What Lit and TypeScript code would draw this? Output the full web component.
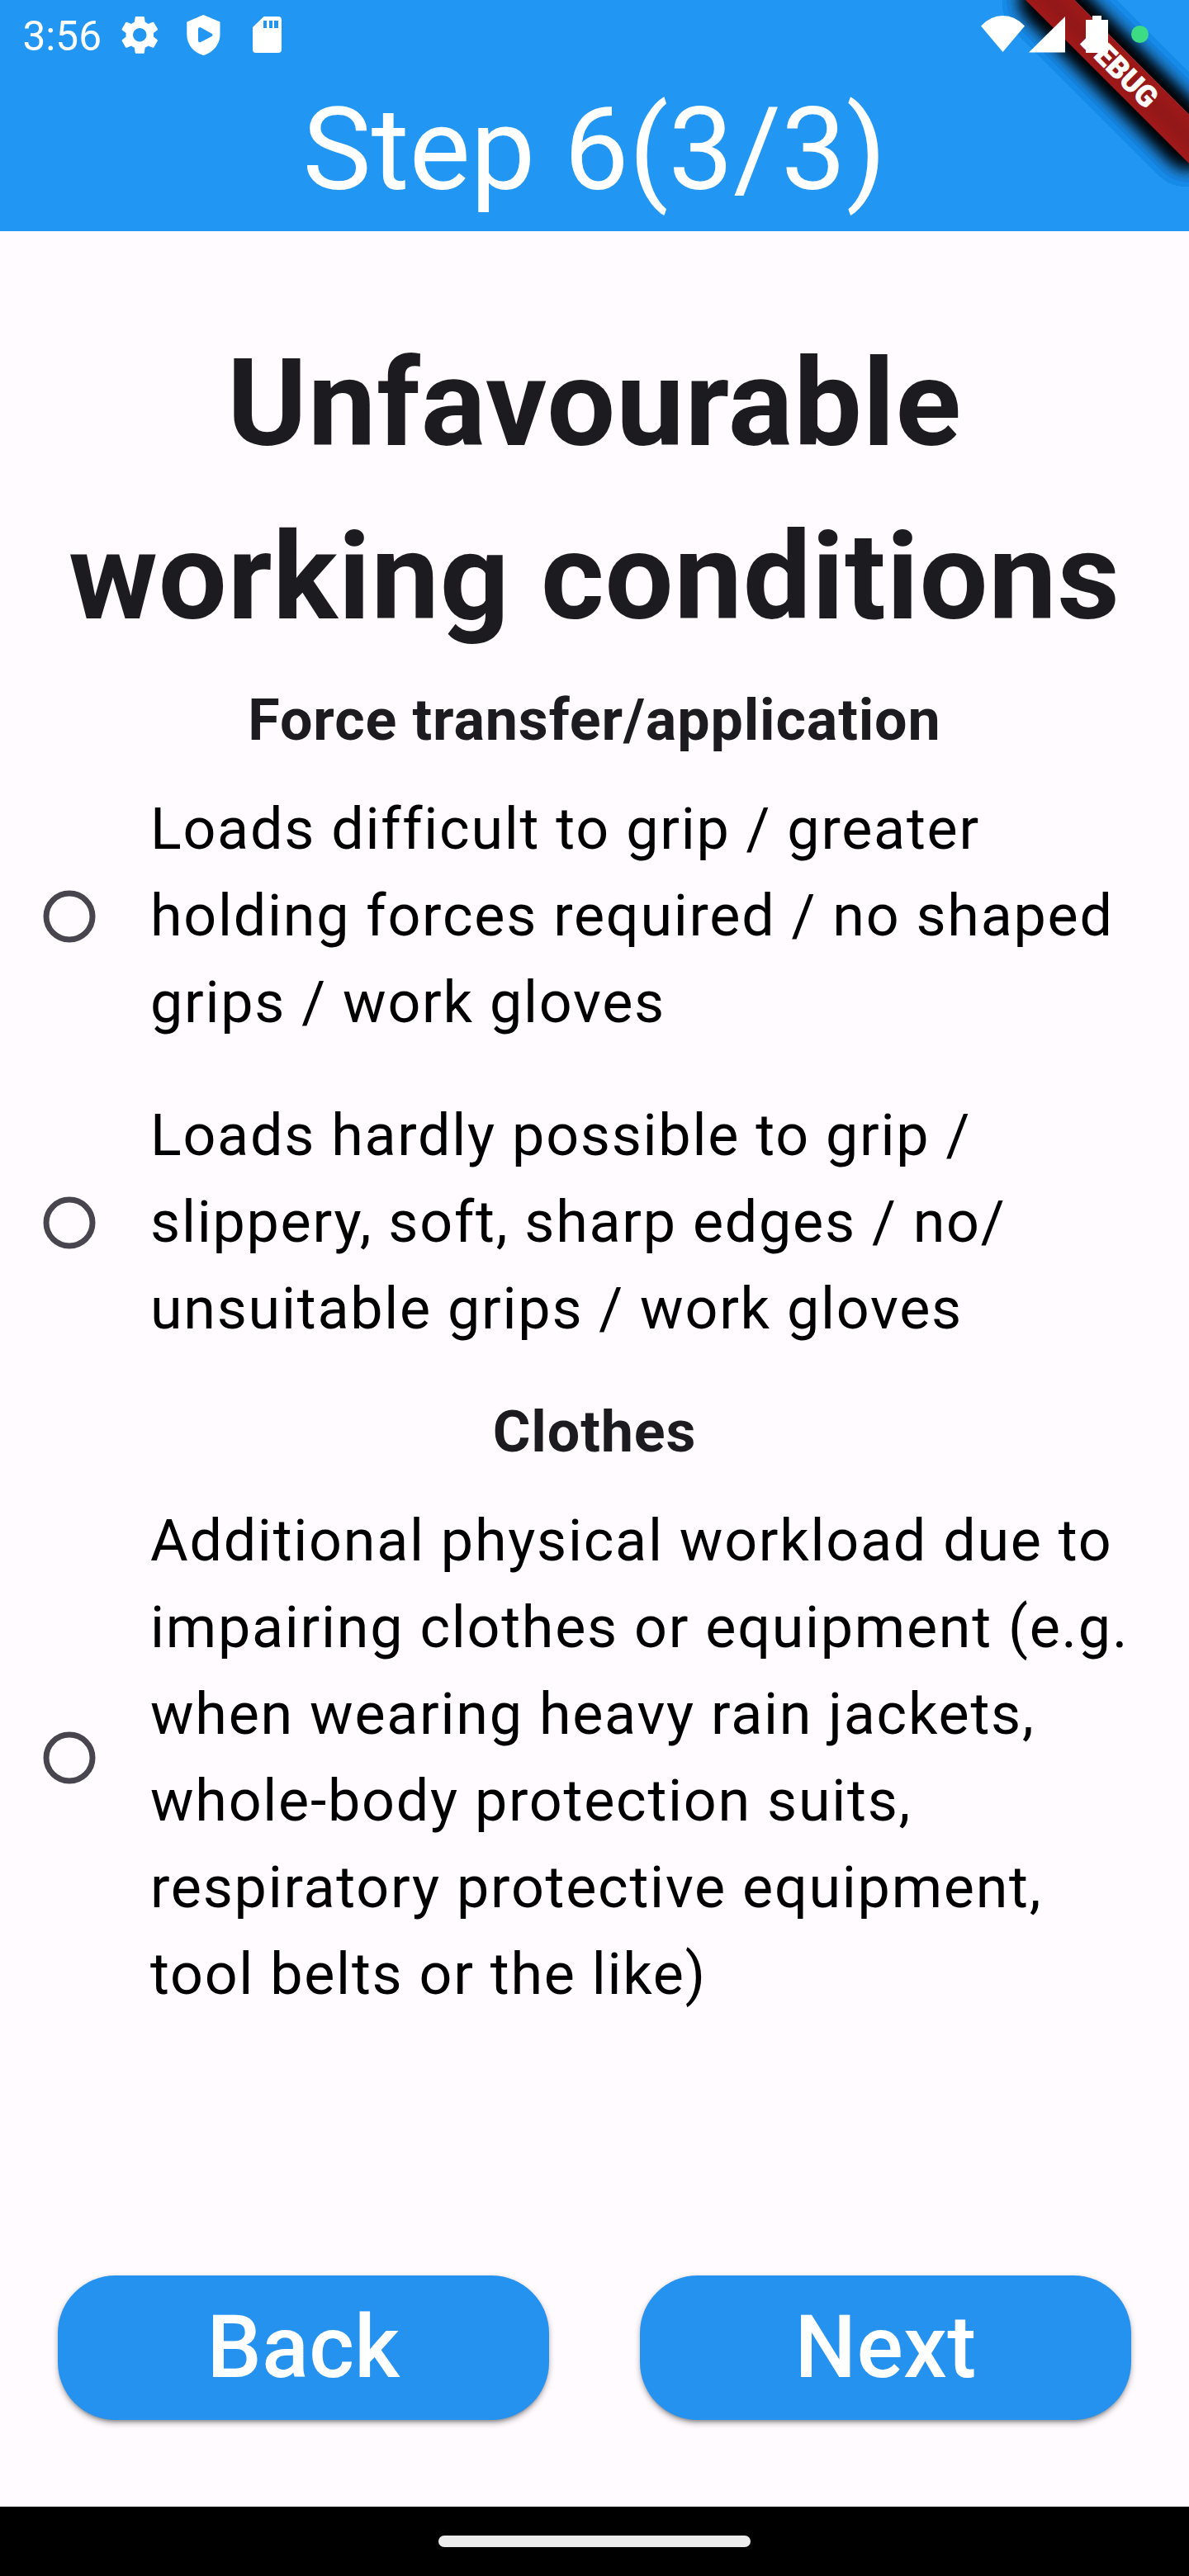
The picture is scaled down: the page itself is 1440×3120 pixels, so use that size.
import { LitElement, html, css, svg } from "lit";
import { customElement, property, state } from "lit/decorators.js";

@customElement("status-bar")
class StatusBar extends LitElement {
  static styles = css`
    :host { display: flex; height: 84px; color: #fff; align-items: flex-start; position: relative; z-index: 3; }
    .time { margin: 15px 0 0 27.5px; width: 120.5px; font-size: 49.5px; line-height: 58px; white-space: nowrap; }
    svg { display: block; flex: none; fill: #fff; }
    .left { width: 400px; height: 84px; margin-left: -148px; }
    .right { width: 280px; height: 84px; margin-left: auto; }
    .dot { fill: #3ddc84; }
  `;
  render() {
    return html`
      <div class="time">3:56</div>
      <svg class="left" viewBox="0 0 400 84">
        <g transform="translate(141.3 14.3) scale(2.33)">
          <path d="M19.14 12.94c.04-.3.06-.61.06-.94 0-.32-.02-.64-.07-.94l2.03-1.58c.18-.14.23-.41.12-.61l-1.92-3.32c-.12-.22-.37-.29-.59-.22l-2.39.96c-.5-.38-1.03-.7-1.62-.94l-.36-2.54c-.04-.24-.24-.41-.48-.41h-3.84c-.24 0-.43.17-.47.41l-.36 2.54c-.59.24-1.13.57-1.62.94l-2.39-.96c-.22-.08-.47 0-.59.22L2.74 8.87c-.12.21-.08.47.12.61l2.03 1.58c-.05.3-.09.63-.09.94s.02.64.07.94l-2.03 1.58c-.18.14-.23.41-.12.61l1.92 3.32c.12.22.37.29.59.22l2.39-.96c.5.38 1.03.7 1.62.94l.36 2.54c.05.24.24.41.48.41h3.84c.24 0 .44-.17.47-.41l.36-2.54c.59-.24 1.13-.56 1.62-.94l2.39.96c.22.08.47 0 .59-.22l1.92-3.32c.12-.22.07-.47-.12-.61l-2.01-1.58zM12 15.5c-1.93 0-3.5-1.57-3.5-3.5s1.57-3.5 3.5-3.5 3.500 1.57 3.500 3.500-1.570 3.500-3.500 3.500z"/>
        </g>
        <path fill-rule="evenodd" d="M246.300 18L266.500 26.500V42C266.500 54 257.500 64 246.300 67C235 64 226.300 54 226.300 42V26.500ZM240 35.500V49Q240 52 243 51L256.500 44Q258.500 42.300 256.500 40.800L243 33.200Q240 32 240 35.500Z"/>
        <path fill-rule="evenodd" d="M319.500 20H337Q341 20 341 24V60Q341 64 337 64H310Q306 64 306 60V33ZM319 25V34H323V25ZM326 25V34H330V25ZM332 25V34H337V25Z"/>
      </svg>
      <svg class="right" viewBox="0 0 280 84">
        <path d="M28 31.500Q39.500 19 54.500 19T81 31.500L54.500 63Z"/>
        <path d="M86 63.500L130 20V63.500Z"/>
        <path d="M163 19H174V24H182V64H155V24H163Z"/>
        <circle class="dot" cx="220.500" cy="41.500" r="10.500"/>
      </svg>
    `;
  }
}

@customElement("radio-option")
class RadioOption extends LitElement {
  @property() label = "";
  @property({ type: Boolean }) checked = false;
  static styles = css`
    :host { display: flex; align-items: center; padding: 28px 56px 28px 0; color: #000; cursor: pointer; }
    .radio { flex: none; width: 168px; display: flex; justify-content: center; margin-right: 14px; }
    svg { display: block; width: 64px; height: 64px; fill: none; stroke: #49454f; stroke-width: 7; }
    .fill { fill: #2196f3; stroke: none; }
    .label { font-size: 70px; line-height: 105px; letter-spacing: 1.75px; white-space: pre-line; }
  `;
  render() {
    return html`
      <span class="radio"><svg viewBox="-32 -32 64 64"><circle r="28"/>${this.checked ? svg`<circle class="fill" r="15.75"/>` : ""}</svg></span>
      <span class="label">${this.label}</span>
    `;
  }
}

@customElement("app-root")
class AppRoot extends LitElement {
  @state() private selected: string | null = null;

  private groups = [
    {
      title: "Force transfer/application",
      options: [
        "Loads difficult to grip / greater\nholding forces required / no shaped\ngrips / work gloves",
        "Loads hardly possible to grip /\nslippery, soft, sharp edges / no/\nunsuitable grips / work gloves",
      ],
    },
    {
      title: "Clothes",
      options: [
        "Additional physical workload due to\nimpairing clothes or equipment (e.g.\nwhen wearing heavy rain jackets,\nwhole-body protection suits,\nrespiratory protective equipment,\ntool belts or the like)",
      ],
    },
  ];

  static styles = css`
    :host { display: flex; flex-direction: column; width: 1440px; height: 3120px; overflow: hidden; position: relative; background: #fffbff; font-family: Roboto, "Liberation Sans", sans-serif; }
    .header { flex: none; height: 280px; background: #2196f3; color: #fff; }
    .title { font-size: 140px; line-height: 164px; font-weight: 400; text-align: center; margin: 15px 0 0; white-space: nowrap; }
    .content { flex: 1; padding-top: 104px; color: #1c1b1f; }
    .heading { margin: 0; font-size: 147px; line-height: 210px; font-weight: 700; text-align: center; letter-spacing: .875px; white-space: pre-line; }
    .subtitle { margin: 0; padding: 18px 0 2px; font-size: 70px; line-height: 100px; font-weight: 700; text-align: center; letter-spacing: .875px; }
    .subtitle.first { padding-top: 18px; }
    .actions { flex: none; display: flex; justify-content: space-between; padding: 0 70px 105px; }
    .button { width: 595px; height: 175px; padding: 0; border: 0; border-radius: 70px; background: #2592ef; color: #fff; font: 500 105px/123px Roboto, "Liberation Sans", sans-serif; letter-spacing: .35px; box-shadow: 0 3.5px 7px rgba(0,0,0,.3), 0 3.5px 3.5px -2px rgba(0,0,0,.2); }
    .nav { flex: none; height: 84px; background: #000; display: flex; justify-content: center; align-items: center; }
    .pill { width: 378px; height: 14px; border-radius: 7px; background: #ececec; }
    .banner { position: absolute; top: 98px; left: 1300px; width: 280px; height: 42px; transform-origin: 140px -98px; transform: rotate(45deg); z-index: 2;
      background: linear-gradient(#a01919, #921717 50%, #a01919); color: #fff; font-size: 35.7px; line-height: 42px; font-weight: 900; text-align: center; -webkit-text-stroke: .5px #fff;
      box-shadow: 0 0 28px rgba(0,0,0,.5), 0 0 28px rgba(0,0,0,.5), 0 0 28px rgba(0,0,0,.5), 0 0 28px rgba(0,0,0,.5), 0 0 28px rgba(0,0,0,.5), 0 0 28px rgba(0,0,0,.5), 0 0 28px rgba(0,0,0,.5), 0 0 28px rgba(0,0,0,.5), 0 0 28px rgba(0,0,0,.5), 0 0 28px rgba(0,0,0,.5), 0 0 28px rgba(0,0,0,.5), 0 0 28px rgba(0,0,0,.5); }
  `;

  render() {
    return html`
      <header class="header">
        <status-bar></status-bar>
        <h1 class="title">Step 6(3/3)</h1>
      </header>
      <main class="content">
        <h2 class="heading">${"Unfavourable\nworking conditions"}</h2>
        ${this.groups.map(
          (g) => html`
            <h3 class="subtitle">${g.title}</h3>
            ${g.options.map(
              (o) => html`<radio-option .label=${o} ?checked=${this.selected === o} @click=${() => (this.selected = o)}></radio-option>`
            )}
          `
        )}
      </main>
      <div class="actions">
        <button class="button">Back</button>
        <button class="button">Next</button>
      </div>
      <div class="nav"><div class="pill"></div></div>
      <div class="banner">DEBUG</div>
    `;
  }
}
